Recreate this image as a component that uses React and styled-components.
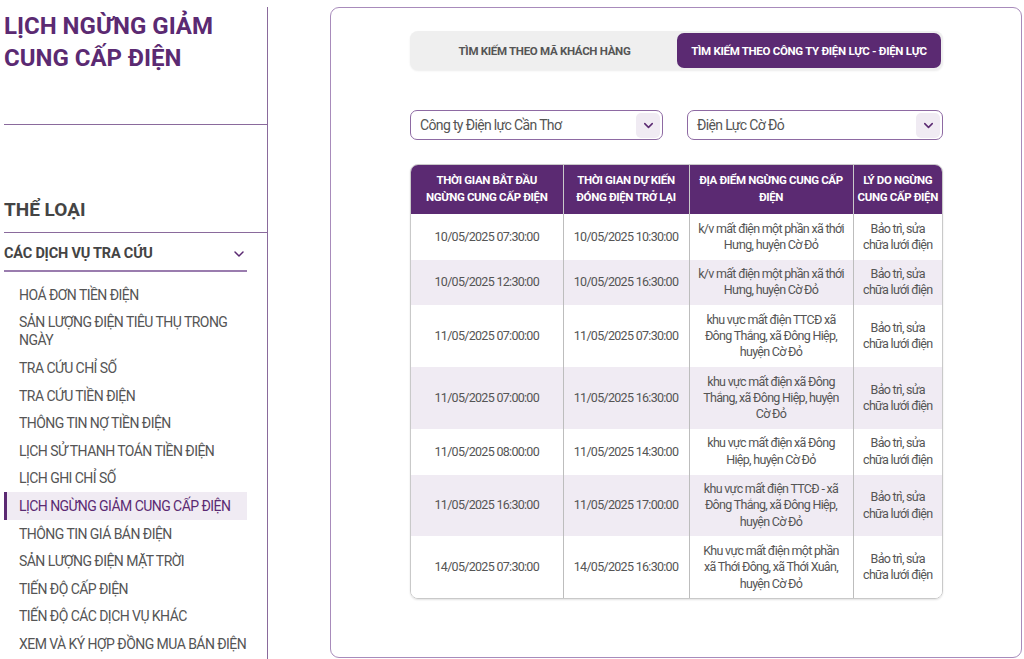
import React from "react";
import styled, { createGlobalStyle } from "styled-components";
import { ChevronDown } from "lucide-react";

const PURPLE = "#5b2a72";
const LILAC = "#f0ebf3";

const Global = createGlobalStyle`
  html, body { margin: 0; padding: 0; background: #fff; }
  body { font-family: Roboto, "Noto Sans", "Liberation Sans", sans-serif; color: #555; }
  * { box-sizing: border-box; }
`;

const Page = styled.div`
  display: flex;
  align-items: flex-start;
  padding-top: 7px;
  width: 1024px;
  height: 659px;
  overflow: hidden;
`;

const Sidebar = styled.aside`
  width: 268px;
  flex: none;
  height: 652px;
  border-right: 1px solid #8a6a9c;
  padding-top: 3px;
`;

const Title = styled.h1`
  margin: 0 0 0 4px;
  font-size: 24px;
  line-height: 32px;
  font-weight: 700;
  color: ${PURPLE};
`;

const Rule = styled.div`
  margin-left: 4px;
  height: 1px;
  background: #8a6a9c;
`;

const TopRule = styled(Rule)`
  margin-top: 50px;
`;

const Category = styled.h2`
  margin: 73px 0 10px 4px;
  font-size: 19px;
  line-height: 24px;
  font-weight: 700;
  color: #444;
`;

const Group = styled.div`
  margin-left: 4px;
  width: 243px;
`;

const GroupHead = styled.div`
  display: flex;
  align-items: center;
  justify-content: space-between;
  height: 39px;
  padding-top: 4px;
  font-size: 14.5px;
  font-weight: 700;
  letter-spacing: -0.2px;
  color: #444;
  border-bottom: 2px solid #9a7cae;
  svg { color: ${PURPLE}; }
`;

const Menu = styled.ul`
  list-style: none;
  margin: 9px 0 0;
  padding: 0;
`;

const Item = styled.li`
  padding: 4.8px 0 4.8px 12px;
  font-size: 14px;
  line-height: 18px;
  letter-spacing: -0.55px;
  color: ${(p) => (p.$active ? PURPLE : "#555")};
  background: ${(p) => (p.$active ? LILAC : "transparent")};
  border-left: 3px solid ${(p) => (p.$active ? PURPLE : "transparent")};
`;

const Card = styled.main`
  margin-left: 62px;
  width: 692px;
  height: 651px;
  border: 1px solid #a88bbb;
  border-radius: 9px;
  padding-top: 23px;
`;

const Content = styled.div`
  width: 533px;
  margin-left: 79px;
`;

const Tabs = styled.div`
  display: grid;
  grid-template-columns: 265px 1fr;
  height: 39px;
  padding: 2px;
  border-radius: 8px;
  background: #efefef;
  box-shadow: 0 1px 2px rgba(0, 0, 0, 0.08);
`;

const Tab = styled.div`
  display: flex;
  align-items: center;
  justify-content: center;
  border-radius: 7px;
  font-size: 11.5px;
  font-weight: 700;
  letter-spacing: -0.3px;
  color: ${(p) => (p.$active ? "#fff" : "#555")};
  background: ${(p) => (p.$active ? PURPLE : "transparent")};
`;

const Filters = styled.div`
  display: grid;
  grid-template-columns: 253px 256px;
  justify-content: space-between;
  margin-top: 40px;
`;

const Select = styled.div`
  display: flex;
  align-items: center;
  justify-content: space-between;
  height: 30px;
  padding: 0 2px 0 9px;
  border: 1px solid #8e6aa3;
  border-radius: 7px;
  font-size: 14px;
  letter-spacing: -0.65px;
  color: #555;
  background: #fff;
`;

const Caret = styled.span`
  display: flex;
  align-items: center;
  justify-content: center;
  width: 24px;
  height: 25px;
  border-radius: 5px;
  background: ${LILAC};
  color: ${PURPLE};
`;

const TableWrap = styled.div`
  margin-top: 24px;
  border: 1px solid #c9c9c9;
  border-radius: 8px;
  overflow: hidden;
  box-shadow: 0 1px 2px rgba(0, 0, 0, 0.12);
`;

const Table = styled.table`
  width: 100%;
  border-collapse: collapse;
  table-layout: fixed;
`;

const Th = styled.th`
  background: ${PURPLE};
  color: #fff;
  font-size: 11.5px;
  font-weight: 700;
  line-height: 17px;
  letter-spacing: -0.35px;
  padding: 7px 7px 8px;
  text-align: center;
  border-left: 1px solid #c9c9c9;
  &:first-child { border-left: none; }
  &:last-child { padding-left: 2px; padding-right: 2px; }
`;

const Tr = styled.tr`
  background: ${(p) => (p.$alt ? LILAC : "#fff")};
`;

const Td = styled.td`
  font-size: 12.5px;
  line-height: 16.3px;
  letter-spacing: -0.7px;
  padding: 6.5px 7.5px;
  text-align: center;
  vertical-align: middle;
  color: #555;
  border-left: 1px solid #bdbdbd;
  &:first-child { border-left: none; }
  &:last-child { padding-left: 7px; padding-right: 7px; }
`;

const menu = [
  "HOÁ ĐƠN TIỀN ĐIỆN",
  "SẢN LƯỢNG ĐIỆN TIÊU THỤ TRONG NGÀY",
  "TRA CỨU CHỈ SỐ",
  "TRA CỨU TIỀN ĐIỆN",
  "THÔNG TIN NỢ TIỀN ĐIỆN",
  "LỊCH SỬ THANH TOÁN TIỀN ĐIỆN",
  "LỊCH GHI CHỈ SỐ",
  "LỊCH NGỪNG GIẢM CUNG CẤP ĐIỆN",
  "THÔNG TIN GIÁ BÁN ĐIỆN",
  "SẢN LƯỢNG ĐIỆN MẶT TRỜI",
  "TIẾN ĐỘ CẤP ĐIỆN",
  "TIẾN ĐỘ CÁC DỊCH VỤ KHÁC",
  "XEM VÀ KÝ HỢP ĐỒNG MUA BÁN ĐIỆN",
];

const reason = "Bảo trì, sửa chữa lưới điện";

const rows = [
  ["10/05/2025 07:30:00", "10/05/2025 10:30:00", "k/v mất điện một phần xã thới Hưng, huyện Cờ Đỏ"],
  ["10/05/2025 12:30:00", "10/05/2025 16:30:00", "k/v mất điện một phần xã thới Hưng, huyện Cờ Đỏ"],
  ["11/05/2025 07:00:00", "11/05/2025 07:30:00", "khu vực mất điện TTCĐ xã Đông Thắng, xã Đông Hiệp, huyện Cờ Đỏ"],
  ["11/05/2025 07:00:00", "11/05/2025 16:30:00", "khu vực mất điện xã Đông Thắng, xã Đông Hiệp, huyện Cờ Đỏ"],
  ["11/05/2025 08:00:00", "11/05/2025 14:30:00", "khu vực mất điện xã Đông Hiệp, huyện Cờ Đỏ"],
  ["11/05/2025 16:30:00", "11/05/2025 17:00:00", "khu vực mất điện TTCĐ - xã Đông Thắng, xã Đông Hiệp, huyện Cờ Đỏ"],
  ["14/05/2025 07:30:00", "14/05/2025 16:30:00", "Khu vực mất điện một phần xã Thới Đông, xã Thới Xuân, huyện Cờ Đỏ"],
];

export default function App() {
  return (
    <>
      <Global />
      <Page>
        <Sidebar>
          <Title>
            LỊCH NGỪNG GIẢM
            <br />
            CUNG CẤP ĐIỆN
          </Title>
          <TopRule />
          <Category>THỂ LOẠI</Category>
          <Rule />
          <Group>
            <GroupHead>
              CÁC DỊCH VỤ TRA CỨU
              <ChevronDown size={16} strokeWidth={2.2} />
            </GroupHead>
            <Menu>
              {menu.map((m) => (
                <Item key={m} $active={m === "LỊCH NGỪNG GIẢM CUNG CẤP ĐIỆN"}>
                  {m}
                </Item>
              ))}
            </Menu>
          </Group>
        </Sidebar>

        <Card>
          <Content>
            <Tabs>
              <Tab>TÌM KIẾM THEO MÃ KHÁCH HÀNG</Tab>
              <Tab $active>TÌM KIẾM THEO CÔNG TY ĐIỆN LỰC - ĐIỆN LỰC</Tab>
            </Tabs>

            <Filters>
              <Select>
                Công ty Điện lực Cần Thơ
                <Caret>
                  <ChevronDown size={15} strokeWidth={2.4} />
                </Caret>
              </Select>
              <Select>
                Điện Lực Cờ Đỏ
                <Caret>
                  <ChevronDown size={15} strokeWidth={2.4} />
                </Caret>
              </Select>
            </Filters>

            <TableWrap>
              <Table>
                <colgroup>
                  <col style={{ width: 152 }} />
                  <col style={{ width: 126 }} />
                  <col style={{ width: 164 }} />
                  <col />
                </colgroup>
                <thead>
                  <tr>
                    <Th>THỜI GIAN BẮT ĐẦU NGỪNG CUNG CẤP ĐIỆN</Th>
                    <Th>THỜI GIAN DỰ KIẾN ĐÓNG ĐIỆN TRỞ LẠI</Th>
                    <Th>ĐỊA ĐIỂM NGỪNG CUNG CẤP ĐIỆN</Th>
                    <Th>LÝ DO NGỪNG CUNG CẤP ĐIỆN</Th>
                  </tr>
                </thead>
                <tbody>
                  {rows.map((r, i) => (
                    <Tr key={i} $alt={i % 2 === 1}>
                      <Td>{r[0]}</Td>
                      <Td>{r[1]}</Td>
                      <Td>{r[2]}</Td>
                      <Td>{reason}</Td>
                    </Tr>
                  ))}
                </tbody>
              </Table>
            </TableWrap>
          </Content>
        </Card>
      </Page>
    </>
  );
}
